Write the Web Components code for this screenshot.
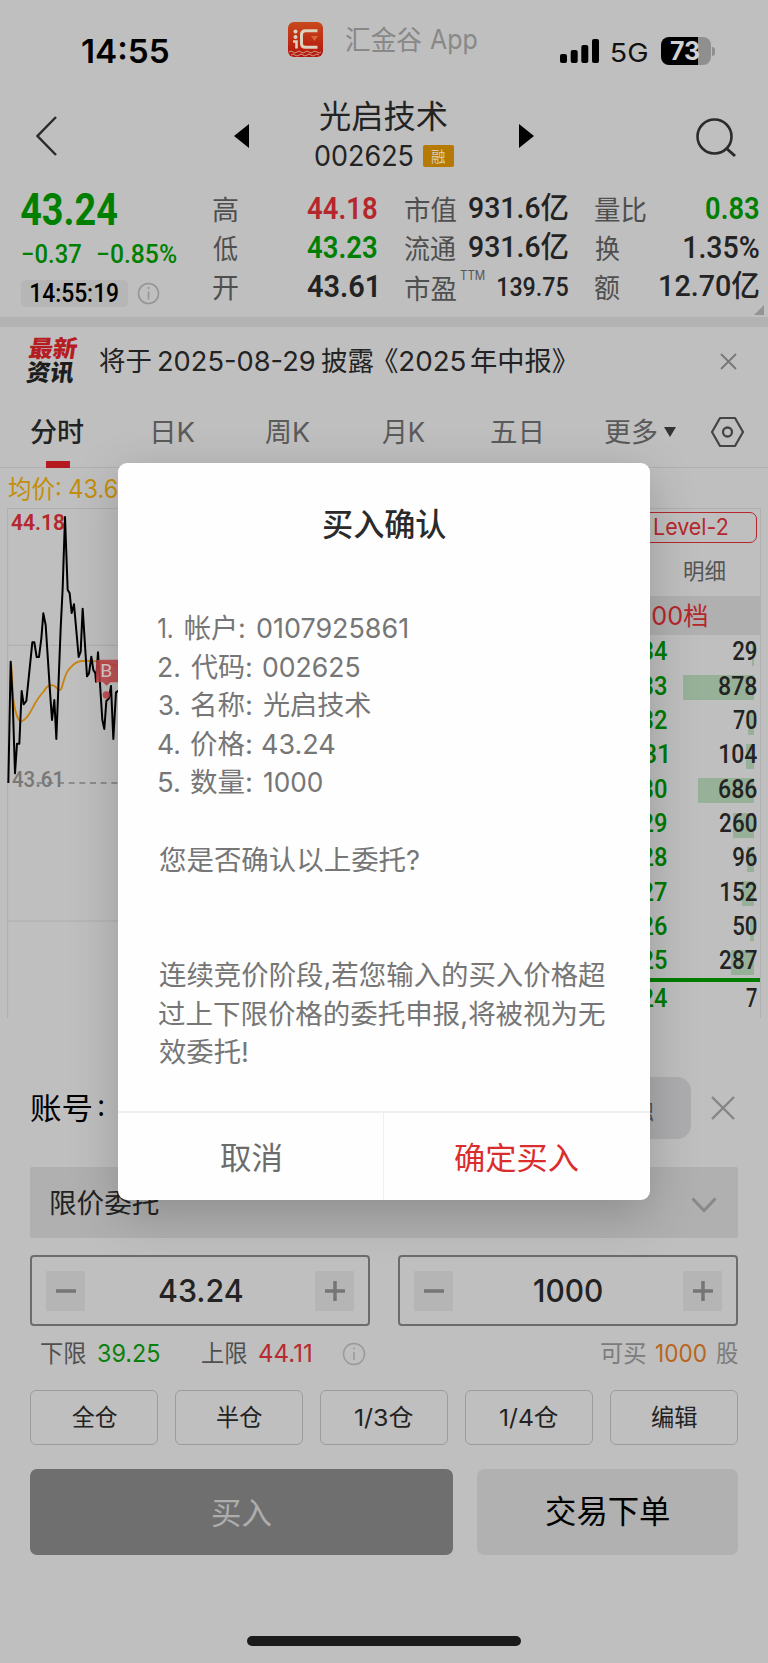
<!DOCTYPE html>
<html lang="zh-CN">
<head>
<meta charset="utf-8">
<title>买入确认</title>
<style>
html,body{margin:0;padding:0;background:#bfbfbf}
body{width:768px;height:1663px;overflow:hidden;font-family:Inter,"Noto Sans CJK SC",sans-serif;color:#232323}
</style>
</head>
<body>
<trade-app></trade-app>
<script>
const UI='Inter,"Noto Sans CJK SC",sans-serif';
const DIN='Roboto,"Noto Sans CJK SC",sans-serif';
const ctx=document.createElement('canvas').getContext('2d');
const define=(name,css,html)=>customElements.define(name,class extends HTMLElement{
  constructor(){
    super();
    const t=document.createElement('template');
    t.innerHTML=`<style>:host{display:block}*{box-sizing:border-box}.row{display:flex;align-items:flex-start}svg{display:block;flex:none}${css}</style>${html}`;
    this.attachShadow({mode:'open'}).append(t.content.cloneNode(true));
  }
});

/* One line of text whose drawn width is w; s = size, wt = weight, c = colour, ml = left gap, cy = centre line in its row */
customElements.define('fit-text',class extends HTMLElement{
  connectedCallback(){
    if(this.shadowRoot)return;
    const a=(k,d)=>this.getAttribute(k)??d;
    const s=+a('s',26),w=+a('w',0),wt=a('wt',400),f=this.hasAttribute('din')?DIN:UI;
    ctx.font=`${wt} ${s}px ${f}`;
    const m=ctx.measureText(this.textContent);
    const k=w?w/(m.actualBoundingBoxLeft+m.actualBoundingBoxRight):1;
    const cy=a('cy',null);
    this.attachShadow({mode:'open'}).innerHTML=`<style>
      :host{display:block;flex:none;width:${w}px;height:${s}px;margin-left:${a('ml',0)}px;${cy!==null?`margin-top:${cy-s/2}px;`:''}font:${wt} ${s}px/${s}px ${f};color:${a('c','inherit')};white-space:pre}
      span{display:inline-block;transform-origin:0 50%;transform:translateX(${m.actualBoundingBoxLeft*k}px) scaleX(${k})}
    </style><span><slot></slot></span>`;
  }
});

define('status-bar',`:host{height:90px}.ic{margin:22px 0 0 119px}.sig{margin:39px 0 0 83px}.bat{display:flex;position:relative;width:50px;height:28px;margin:37px 0 0 14px;border-radius:8px;background:linear-gradient(90deg,#000 37px,#8f8f8f 37px)}.nub{width:3px;height:9px;border-radius:0 4px 4px 0;background:#8f8f8f;margin:47px 0 0 1px}`,
`<div class="row">
<fit-text ml="82" cy="51.5" s="33" wt="600" w="87" c="#000">14:55</fit-text>
<svg class="ic" width="35" height="35" viewBox="0 0 35 35"><defs><linearGradient id="g" x2="0" y2="1"><stop stop-color="#c9481c"/><stop offset="1" stop-color="#b3140c"/></linearGradient></defs><rect width="35" height="35" rx="6" fill="url(#g)"/><path d="M1 30q2-2 4 0t4 0t4 0t4 0t4 0t4 0t4 0t4 0M3 33q2-2 4 0t4 0t4 0t4 0t4 0t4 0t4 0" fill="none" stroke="#cf9a80" stroke-width="1"/><path d="M29.500 8.800H17.500q-4 0-4 4v8.500q0 4 4 4h12" fill="none" stroke="#ddd2bd" stroke-width="3"/><circle cx="7.500" cy="9.500" r="2" fill="#ddd2bd"/><circle cx="7.500" cy="15" r="2" fill="#ddd2bd"/><path d="M5 19.500h3.500v7" fill="none" stroke="#ddd2bd" stroke-width="2.600"/><path d="M23 14h7l-3.500 5z" fill="#d9683a"/></svg>
<fit-text ml="23" cy="40" s="27" w="76" c="#888">汇金谷</fit-text><fit-text ml="8" cy="40" s="27.500" w="47" c="#888">App</fit-text>
<svg class="sig" width="39" height="24"><g fill="#000"><rect y="15" width="7" height="9" rx="2"/><rect x="10.700" y="11" width="7" height="13" rx="2"/><rect x="21.300" y="6" width="7" height="18" rx="2"/><rect x="32" width="7" height="24" rx="2"/></g></svg>
<fit-text ml="13" cy="52.500" s="26" w="35" c="#111">5G</fit-text>
<div class="bat"><fit-text ml="9" cy="14.500" s="25" wt="700" w="29" c="#d2d2d2">73</fit-text></div><div class="nub"></div>
</div>`);

define('stock-nav',`:host{height:90px}.mid{width:139px;margin-left:66px}.mid .row{height:auto}.code{padding-top:4px}.badge{width:31px;height:22px;margin:8px 0 0 10px;border-radius:2px;background:#b67a03}`,
`<div class="row">
<svg style="margin:25px 0 0 34px" width="24" height="42"><path d="M22 2L3.500 21L22 40" fill="none" stroke="#2b2b2b" stroke-width="2.500"/></svg>
<svg style="margin:34px 0 0 176px" width="15" height="24"><path d="M15 0v24L0 12z"/></svg>
<div class="mid"><div class="row"><fit-text ml="5" cy="27" s="32" w="127">光启技术</fit-text></div>
<div class="row code"><fit-text cy="18.500" s="28" w="98">002625</fit-text><div class="badge"><fit-text ml="8" cy="11" s="15" w="14.500" c="#dacbb0">融</fit-text></div></div></div>
<svg style="margin:34px 0 0 65px" width="15" height="24"><path d="M0 0v24l15-12z"/></svg>
<svg style="margin:26px 0 0 161px" width="44" height="44"><circle cx="19.500" cy="20.500" r="17" fill="none" stroke="#2b2b2b" stroke-width="2.600"/><path d="M31 32l9 8" stroke="#2b2b2b" stroke-width="3"/></svg>
</div>`);

const row=(h,inner)=>`<div class="row" style="height:${h}px">${inner}</div>`;
define('quote-panel',`:host{height:137px}.cols{display:flex;padding:8px 0 0 21px;height:137px}.l{width:192px}.h{width:192px}.m{width:190px}.pill{width:107px;height:27px;background:#b6b6b6;border-radius:5px}svg{margin-left:9px;margin-top:2px}.corner{margin:-1px 0 0 159px}`,
`<div class="cols">
<div class="l">${row(49,'<fit-text din s="43.500" wt="700" cy="23" w="96" c="#007f00">43.24</fit-text>')}
${row(42.5,'<fit-text din s="26" wt="500" ml="1" cy="17" w="59" c="#007f00">−0.37</fit-text><fit-text din s="26" wt="500" ml="16" cy="17" w="79" c="#007f00">−0.85%</fit-text>')}
${row(30,'<div class="pill"><fit-text din s="25" wt="500" ml="10" cy="13.500" w="87" c="#000">14:55:19</fit-text></div><svg width="23" height="23"><circle cx="11.500" cy="11.500" r="10" fill="none" stroke="#959595" stroke-width="1.600"/><path d="M11.500 9.500v8M11.500 5v2" stroke="#959595" stroke-width="1.600"/></svg>')}</div>
<div class="h">${row(39.2,'<fit-text s="27" cy="22" w="25" c="#4f4f4f">高</fit-text><fit-text din s="31" wt="600" ml="69" cy="20" w="70" c="#b5272c">44.18</fit-text>')}
${row(39.2,'<fit-text s="27" cy="22" w="25" c="#4f4f4f">低</fit-text><fit-text din s="31" wt="600" ml="69" cy="20" w="70" c="#007f00">43.23</fit-text>')}
${row(39.2,'<fit-text s="27" cy="22" w="25" c="#4f4f4f">开</fit-text><fit-text din s="31" wt="600" ml="69" cy="20" w="69">43.61</fit-text>')}</div>
<div class="m">${row(39.2,'<fit-text s="27" cy="22" w="51" c="#4f4f4f">市值</fit-text><fit-text din s="30" wt="500" ml="13" cy="20" w="99">931.6亿</fit-text>')}
${row(39.2,'<fit-text s="27" cy="22" w="51" c="#4f4f4f">流通</fit-text><fit-text din s="30" wt="500" ml="13" cy="20" w="99">931.6亿</fit-text>')}
${row(39.2,'<fit-text s="27" cy="23.500" w="51" c="#4f4f4f">市盈</fit-text><fit-text s="12.500" ml="4" cy="9.500" w="25" c="#555">TTM</fit-text><fit-text din s="26" wt="500" ml="13" cy="20.500" w="70">139.75</fit-text>')}</div>
<div>${row(39.2,'<fit-text s="27" cy="22" w="51" c="#4f4f4f">量比</fit-text><fit-text din s="31" wt="600" ml="60" cy="20" w="53" c="#007f00">0.83</fit-text>')}
${row(39.2,'<fit-text s="27" cy="22" w="25" c="#4f4f4f">换</fit-text><fit-text din s="31" wt="500" ml="64" cy="20" w="75">1.35%</fit-text>')}
${row(39.2,'<fit-text s="27" cy="22" w="25" c="#4f4f4f">额</fit-text><fit-text din s="30" wt="500" ml="40" cy="20" w="99">12.70亿</fit-text>')}
<svg class="corner" width="10" height="10"><path d="M10 0v10H0z" fill="#949494"/></svg></div>
</div>`);

define('news-bar',`:host{height:80px;border-top:10px solid #b2b2b2}.logo{width:50px;margin-left:28px;transform:skewX(-8deg)}`,
`<div class="row"><div class="logo"><div class="row" style="height:24px"><fit-text s="23.500" wt="900" cy="22" w="48" c="#b51d22">最新</fit-text></div><div class="row"><fit-text s="23.500" wt="900" ml="1" cy="22" w="48" c="#1d1d1d">资讯</fit-text></div></div>
<fit-text s="27" ml="22" cy="34" w="51">将于</fit-text><fit-text s="27" ml="8" cy="34" w="156">2025-08-29</fit-text><fit-text s="27" ml="6" cy="34" w="53">披露</fit-text><fit-text s="27" ml="11" cy="34" w="80">《2025</fit-text><fit-text s="27" ml="6" cy="34" w="94">年中报》</fit-text>
<svg style="margin:25px 0 0 154px" width="19" height="19"><path d="M2 2l15 15M17 2L2 17" stroke="#777" stroke-width="1.800"/></svg></div>`);

define('period-tabs',`:host{height:71px;border-bottom:1px solid #b0b0b0}.on{width:53px;margin-left:31px}.bar{width:24px;height:7px;background:#b3191f;margin:15px 0 0 15px}`,
`<div class="row"><div class="on"><div class="row" style="height:49px"><fit-text s="27" wt="500" cy="35" w="53">分时</fit-text></div><div class="bar"></div></div>
<fit-text s="27" ml="69" cy="35" w="42" c="#5a5a5a">日K</fit-text><fit-text s="27" ml="70" cy="35" w="45" c="#5a5a5a">周K</fit-text><fit-text s="27" ml="72" cy="35" w="43" c="#5a5a5a">月K</fit-text><fit-text s="27" ml="66" cy="35" w="50" c="#5a5a5a">五日</fit-text><fit-text s="27" ml="64" cy="35" w="52" c="#5a5a5a">更多</fit-text>
<svg style="margin:30px 0 0 7px" width="12" height="10"><path d="M0 0h12L6 10z" fill="#333"/></svg>
<svg style="margin:18.500px 0 0 34px" width="36" height="32" viewBox="0 0 36 32"><path d="M10 2h15l8 14-8 14H10L2 16z" fill="none" stroke="#444" stroke-width="2.200" stroke-linejoin="round"/><circle cx="17.500" cy="16" r="4.500" fill="none" stroke="#444" stroke-width="2.300"/></svg></div>`);

define('minute-chart',`:host{width:620px;flex:none}`,
`${row(40,'<fit-text s="25.500" ml="8" cy="21" w="124" c="#c28e0c">均价: 43.64</fit-text>')}
<svg width="130" height="510" viewBox="0 159 390 1530">
<path d="M23 1689V160.500H390M23 571H390M23 1398H390" fill="none" stroke="#aeaeae" stroke-width="3"/>
<path d="M110 984H390" stroke="#7d7d7d" stroke-width="5" stroke-dasharray="18 14"/>
<text x="33" y="226" font-family="Roboto" font-weight="600" font-size="67" fill="#b5272c" textLength="162" lengthAdjust="spacingAndGlyphs">44.18</text>
<text x="36" y="996" font-family="Roboto" font-weight="500" font-size="67" fill="#777" textLength="156" lengthAdjust="spacingAndGlyphs">43.61</text>
<path d="M33 620L40 735C46 775 55 800 64 799C76 797 90 775 100 755C108 738 120 722 132 708C143 688 155 688 165 694C172 700 180 715 186 695C192 675 197 655 205 645C215 635 222 620 245 618C270 617 290 617 310 624L390 640" fill="none" stroke="#c9820f" stroke-width="5.500"/>
<path d="M25 984L32 620L38 735L45 955L51 866L58 866L65 708L71 748L79 738L97 562L103 562L110 606L117 606L124 550L130 475L137 510L150 710L156 795L163 735L169 852L182 520L188 400L195 186L203 404L209 415L215 474L222 448L236 606L242 590L248 461L261 664L267 655L274 605L280 645L286 655L288 680L294 592L307 795L313 822L319 738L327 730L333 693L340 852L348 712L356 707L368 760L390 700" fill="none" stroke="#000" stroke-width="6" stroke-linejoin="round"/>
<g fill="#bd4146" fill-opacity=".87"><path d="M295 614H356V682H331L320 692L309 682H288V621Q288 614 295 614z"/><circle cx="319" cy="720" r="11"/></g>
<text x="301" y="667" font-family="Roboto" font-weight="400" font-size="54" fill="#d6c9c9" textLength="36" lengthAdjust="spacingAndGlyphs">B</text>
</svg>`);

const data=[[34,29,2],[33,878,71],[32,70,6],[31,104,8],[30,686,56],[29,260,21],[28,96,7],[27,152,12],[26,50,4],[25,287,23],[24,7,0]];
const W={29:24,878:38,70:24,104:37,686:38,260:37,96:24,152:36,50:24,287:37,7:11};
const book=data.map(([p,v,b],i)=>`<div class="r${i==10?' buy':''}"><fit-text din s="25.500" wt="500" w="60" cy="${i==10?16:17}" c="#007a00">43.${p}</fit-text><div class="v" style="--b:${b}px"><fit-text din s="25.500" wt="500" w="${W[v]}" cy="${i==10?16:17}">${v}</fit-text></div></div>`).join('');
define('order-book',`:host{width:141px;height:510px;margin-top:40px;flex:none;border-top:1px solid #b0b0b0;border-right:1px solid #b0b0b0}.lv{margin:3px 3px 0 -60px;height:31px;border:1.500px solid #b5272c;border-radius:7px;display:flex}.cap{height:53px}.band{height:39px;background:#b0b0b0}.r{display:flex;height:34.350px;margin-left:-13px}.buy{border-top:4px solid #007c00}.v{width:86px;height:34px;margin-left:7px;display:flex;justify-content:flex-end;padding-right:3px;background:linear-gradient(#97b098,#97b098) no-repeat calc(100% - 6px) 6px/var(--b) 25px}`,
`<div class="lv"><fit-text s="22.500" ml="93" cy="14" w="74" c="#b5272c">Level-2</fit-text></div>
<div class="row cap"><fit-text s="22" ml="64" cy="28" w="41" c="#555">明细</fit-text></div>
<div class="row band"><fit-text s="25.500" ml="17" cy="19.500" w="70" c="#b5272c">500档</fit-text></div>
${book}`);

define('market-view',`:host{display:flex;height:550px}`,`<minute-chart></minute-chart><order-book></order-book>`);

define('number-stepper',`:host{display:flex;width:340px;height:71px;border:2px solid #6c6c6c;border-radius:4px;justify-content:space-between;align-items:center;padding:0 14px;box-sizing:border-box}.b{width:39px;height:40px;background:#b5b5b5;display:grid;place-items:center}`,
`<div class="b"><svg width="20" height="20"><path d="M0 10h20" stroke="#757575" stroke-width="3.500"/></svg></div><slot></slot><div class="b"><svg width="20" height="20"><path d="M0 10h20M10 0v20" stroke="#757575" stroke-width="3.500"/></svg></div>`);
define('chip-button',`:host{display:grid;place-items:center;width:128px;height:55px;border:1.500px solid #9c9c9c;border-radius:6px;box-sizing:border-box}`,`<slot></slot>`);

define('order-form',`:host{padding:0 30px}.acct{height:149px}.tag{width:91px;height:62px;border-radius:14px;background:#adadaf;margin:59px 0 0 496px}.sel{height:71px;background:#b0b0b0;border-radius:2px}.two{display:flex;justify-content:space-between;margin-top:17px}.lim{height:64px}.chips{display:flex;justify-content:space-between}.act{display:flex;justify-content:space-between;margin-top:24px}.act div{height:86px;border-radius:7px;display:grid;place-items:center}.buy{width:423px;background:#6f6f6f}.go{width:261px;background:#b1b1b1}.home{width:274px;height:10px;border-radius:5px;background:#1b1b1b;margin:81px auto 0 217px}`,
`<div class="row acct"><fit-text s="30" ml="1" cy="89.500" w="60" c="#000">账号</fit-text><fit-text s="30" ml="8" cy="87" w="4.500" c="#000">:</fit-text><div class="tag"><fit-text s="25" ml="29" cy="33" w="25" c="#555">融</fit-text></div>
<svg style="margin:78px 0 0 20px" width="24" height="24"><path d="M1 1l22 22M23 1L1 23" stroke="#858585" stroke-width="2.400"/></svg></div>
<div class="row sel"><fit-text s="27.500" ml="21" cy="37" w="108">限价委托</fit-text><svg style="margin:30px 0 0 532px" width="26" height="16"><path d="M1.500 1.500L13 13.500L24.500 1.500" fill="none" stroke="#898989" stroke-width="3"/></svg></div>
<div class="two"><number-stepper><fit-text s="31.500" wt="500" w="83">43.24</fit-text></number-stepper><number-stepper><fit-text s="31.500" wt="500" w="68">1000</fit-text></number-stepper></div>
<div class="row lim"><fit-text s="23.500" ml="11" cy="28" w="45" c="#505050">下限</fit-text><fit-text s="24" ml="12" cy="28" w="62" c="#0a800e">39.25</fit-text><fit-text s="23.500" ml="42" cy="28" w="45" c="#505050">上限</fit-text><fit-text s="24" ml="12" cy="28" w="52" c="#b82930">44.11</fit-text>
<svg style="margin:16px 0 0 31px" width="24" height="24"><circle cx="12" cy="12" r="10.500" fill="none" stroke="#9a9a9a" stroke-width="1.500"/><path d="M12 10v8M12 5.500v2" stroke="#9a9a9a" stroke-width="1.600"/></svg>
<fit-text s="23.500" ml="235" cy="28" w="45" c="#7c7c7c">可买</fit-text><fit-text s="24" ml="10" cy="28" w="50" c="#b8661d">1000</fit-text><fit-text s="23.500" ml="10" cy="28" w="22" c="#7c7c7c">股</fit-text></div>
<div class="chips"><chip-button><fit-text s="23.500" w="45">全仓</fit-text></chip-button><chip-button><fit-text s="23.500" w="45">半仓</fit-text></chip-button><chip-button><fit-text s="23.500" w="58">1/3仓</fit-text></chip-button><chip-button><fit-text s="23.500" w="58">1/4仓</fit-text></chip-button><chip-button><fit-text s="23.500" w="46">编辑</fit-text></chip-button></div>
<div class="act"><div class="buy"><fit-text s="31" w="59" c="#adadad">买入</fit-text></div><div class="go"><fit-text s="31.500" w="123" c="#000">交易下单</fit-text></div></div>
<div class="home"></div>`);

/* Each line is a list of [left gap, width, text] */
const lines=[
[[40,14,'1.'],[13,59,'帐户:'],[13,150,'0107925861']],
[[41,20,'2.'],[12,60,'代码:'],[12,97,'002625']],
[[41,20,'3.'],[12,60,'名称:'],[12,108,'光启技术']],
[[40,21,'4.'],[12,60,'价格:'],[11,73,'43.24']],
[[41,20,'5.'],[12,60,'数量:'],[13,58,'1000']],
[],[[41,260,'您是否确认以上委托?']],[],[],
[[41,446,'连续竞价阶段,若您输入的买入价格超']],[[41,446,'过上下限价格的委托申报,将被视为无']],[[41,88,'效委托!']]];
define('confirm-dialog',`:host{display:flex;flex-direction:column;width:531.500px;height:737px;background:#fefefe;border-radius:9px;overflow:hidden;box-shadow:0 14px 50px rgba(0,0,0,.2)}.t{height:147px}.body{flex:1}.f{height:89px;border-top:2px solid #efefef;display:flex}.f div{flex:1;display:grid;place-items:center;padding-top:2px}.f div+div{border-left:1.500px solid #efefef}`,
`<div class="row t"><fit-text s="31.500" wt="500" ml="205" cy="62" w="123" c="#2a2a2a">买入确认</fit-text></div>
<div class="body">${lines.map(l=>row(38.55,l.map(([g,w,t])=>`<fit-text s="27.500" ml="${g}" cy="19.500" w="${w}" c="#767676">${t}</fit-text>`).join(''))).join('')}</div>
<div class="f"><div><fit-text s="31" w="60" c="#6c6c6c">取消</fit-text></div><div><fit-text s="31" w="123" c="#da2d2d">确定买入</fit-text></div></div>`);

define('trade-app',`:host{position:relative;width:768px;height:1663px;background:#bfbfbf;overflow:hidden}confirm-dialog{position:absolute;left:118px;top:462.500px}`,
`<status-bar></status-bar><stock-nav></stock-nav><quote-panel></quote-panel><news-bar></news-bar><period-tabs></period-tabs><market-view></market-view><order-form></order-form><confirm-dialog></confirm-dialog>`);
</script>
</body>
</html>
